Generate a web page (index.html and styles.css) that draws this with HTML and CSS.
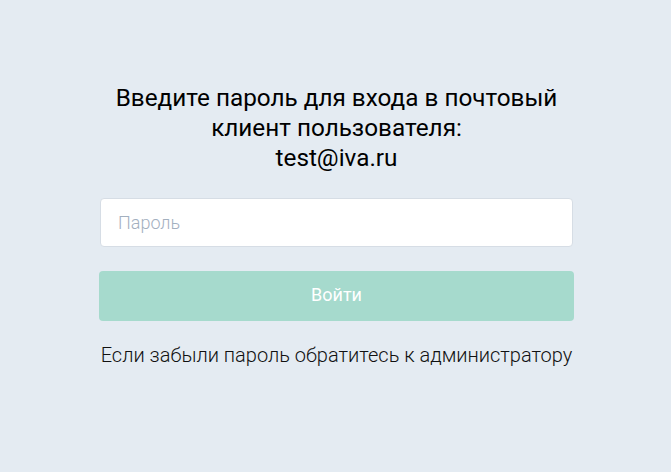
FILE: index.html
```html
<!DOCTYPE html>
<html lang="ru">
<head>
<meta charset="utf-8">
<link rel="stylesheet" href="styles.css">
</head>
<body>
<main class="page">
  <form class="login">
    <h1 class="title">Введите пароль для входа в почтовый клиент пользователя:<br>test@iva.ru</h1>
    <input class="field" type="password" placeholder="Пароль">
    <button class="submit" type="button">Войти</button>
    <p class="hint">Если забыли пароль обратитесь к администратору</p>
  </form>
</main>
</body>
</html>
```
FILE: styles.css
```css
html, body {
  margin: 0;
  padding: 0;
  background: #e4ebf2;
  font-family: Roboto, "Liberation Sans", sans-serif;
}
.page {
  display: flex;
  justify-content: center;
  padding-top: 83px;
  padding-left: 2px;
}
.login {
  width: 475px;
  display: flex;
  flex-direction: column;
  align-items: stretch;
}
.title {
  margin: 0 0 25px;
  font-size: 24.3px;
  line-height: 30px;
  font-weight: 400;
  text-align: center;
  color: #000;
  padding: 0 10px;
}
.field {
  box-sizing: border-box;
  height: 49px;
  margin: 0 1px;
  border: 1px solid #d6dde5;
  border-radius: 4px;
  background: #fff;
  padding: 0 17px;
  font-family: inherit;
  font-size: 18px;
  font-weight: 300;
  color: #333;
  outline: none;
}
.field::placeholder {
  color: #a3b0bf;
}
.submit {
  margin-top: 24px;
  height: 50px;
  border: none;
  border-radius: 4px;
  background: #a6dacd;
  color: #fff;
  font-family: inherit;
  font-size: 18px;
  font-weight: 400;
  padding: 0 0 4px;
}
.hint {
  margin: 21px 0 0;
  text-align: center;
  font-size: 20px;
  font-weight: 300;
  color: #111;
  line-height: 26px;
}
```
